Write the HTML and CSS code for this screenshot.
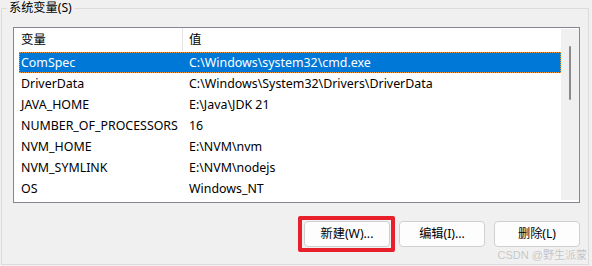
FILE: index.html
```html
<!DOCTYPE html>
<html lang="zh-CN">
<head>
<meta charset="utf-8">
<title>系统变量</title>
<link rel="stylesheet" href="styles.css">
</head>
<body>
<fieldset class="group">
  <legend class="group-title">系统变量(S)</legend>
  <div class="listbox">
    <div class="list">
      <div class="list-header">
        <div class="hcell hcell-name">变量</div>
        <div class="hcell hcell-value">值</div>
      </div>
      <div class="row selected"><span class="cell">ComSpec</span><span class="cell">C:\Windows\system32\cmd.exe</span></div>
      <div class="row"><span class="cell">DriverData</span><span class="cell">C:\Windows\System32\Drivers\DriverData</span></div>
      <div class="row"><span class="cell">JAVA_HOME</span><span class="cell">E:\Java\JDK 21</span></div>
      <div class="row"><span class="cell">NUMBER_OF_PROCESSORS</span><span class="cell">16</span></div>
      <div class="row"><span class="cell">NVM_HOME</span><span class="cell">E:\NVM\nvm</span></div>
      <div class="row"><span class="cell">NVM_SYMLINK</span><span class="cell">E:\NVM\nodejs</span></div>
      <div class="row"><span class="cell">OS</span><span class="cell">Windows_NT</span></div>
    </div>
    <div class="scrollbar"><div class="thumb"></div></div>
  </div>
  <div class="actions">
    <button class="btn btn-marked" type="button">新建(W)...</button>
    <button class="btn" type="button">编辑(I)...</button>
    <button class="btn" type="button">删除(L)</button>
  </div>
  <div class="watermark">CSDN @野生派蒙</div>
</fieldset>
</body>
</html>
```

FILE: styles.css
```css
html, body {
  margin: 0;
  padding: 0;
}
body {
  width: 592px;
  height: 266px;
  overflow: hidden;
  background: #f0f0f0;
  font-family: "Noto Sans", "Noto Sans CJK SC", sans-serif;
  font-size: 12px;
  color: #000;
}
.group {
  position: relative;
  box-sizing: border-box;
  width: 588px;
  height: 265px;
  margin: 0 0 0 1px;
  padding: 0;
  border: 1px solid #dcdcdc;
  min-width: 0;
}
.group-title {
  margin-left: 5px;
  padding: 0 2px;
  line-height: 16px;
  height: 16px;
  font-size: 12.2px;
}
.listbox {
  display: flex;
  box-sizing: border-box;
  height: 176px;
  margin: 11px 8px 0 11px;
  border: 1px solid #828790;
  background: #fff;
}
.list {
  flex: 1;
  min-width: 0;
  padding-left: 5px;
  overflow: hidden;
  font-size: 12.4px;
}
.list-header {
  display: grid;
  grid-template-columns: 164px 1fr;
  height: 24px;
}
.hcell {
  line-height: 24px;
  white-space: nowrap;
}
.hcell-name {
  box-sizing: border-box;
  padding-left: 2px;
  border-right: 1px solid #e5e5e5;
  height: 23px;
}
.hcell-value {
  padding-left: 6px;
}
.row {
  display: grid;
  grid-template-columns: 168px 1fr;
  height: 21px;
  line-height: 21px;
  white-space: nowrap;
}
.cell {
  padding-left: 2px;
  overflow: hidden;
}
.row.selected {
  box-sizing: border-box;
  background: #0078d7;
  color: #fff;
  border: 1px dotted #f29a3a;
  line-height: 19px;
}
.row.selected .cell:first-child {
  padding-left: 1px;
}
.row.selected .cell:last-child {
  padding-left: 1px;
}
.scrollbar {
  width: 18px;
  margin: 1px 0 2px 0;
  background: #f0f0f0;
}
.thumb {
  width: 2px;
  height: 54px;
  margin: 17px auto 0;
  background: #8a8a8a;
  border-radius: 1px;
}
.actions {
  display: flex;
  justify-content: flex-end;
  gap: 9px;
  margin: 18px 8px 0 0;
}
.btn {
  position: relative;
  box-sizing: border-box;
  width: 86px;
  height: 26px;
  padding: 0;
  border: 1px solid #d0d0d0;
  border-radius: 4px;
  background: #fdfdfd;
  font-family: inherit;
  font-size: 12.2px;
  color: #000;
  line-height: 24px;
}
.btn-marked::after {
  content: "";
  position: absolute;
  left: -7px;
  right: -6px;
  top: -6px;
  bottom: -6px;
  border: 4px solid #e8202c;
  border-radius: 2px;
  pointer-events: none;
}
.watermark {
  position: absolute;
  right: 1px;
  bottom: 3px;
  font-family: "Liberation Sans", "Noto Sans CJK SC", sans-serif;
  font-size: 11px;
  line-height: 12px;
  color: #c4c4c4;
  text-shadow: 0 0 1px #fff;
  white-space: nowrap;
}
```
